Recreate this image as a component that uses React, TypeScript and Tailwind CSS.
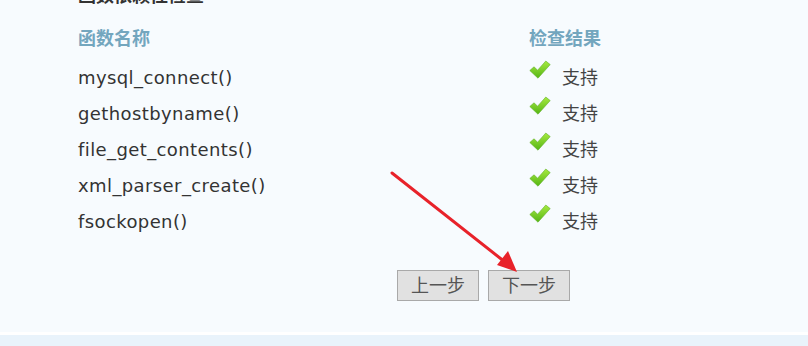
import React from "react";

const rows = [
  "mysql_connect()",
  "gethostbyname()",
  "file_get_contents()",
  "xml_parser_create()",
  "fsockopen()",
];

function Check() {
  return (
    <svg width="22" height="20" viewBox="0 0 22 20" className="shrink-0">
      <defs>
        <linearGradient id="cg" x1="0" y1="0" x2="0" y2="1">
          <stop offset="0" stopColor="#a6ea40" />
          <stop offset="1" stopColor="#55b514" />
        </linearGradient>
      </defs>
      <path
        d="M0.8 10.5 L5 6.8 L8.6 10.2 L16.8 1 L21.2 4.6 L9 18.2 Z"
        fill="url(#cg)"
        stroke="#62b02a"
        strokeWidth="0.6"
        strokeLinejoin="round"
      />
    </svg>
  );
}

export default function App() {
  const font = { fontFamily: '"DejaVu Sans", "Noto Sans CJK SC", sans-serif' };
  return (
    <div className="w-[808px] h-[346px] overflow-hidden bg-[#e9f3fb] relative" style={font}>
      <div className="h-[332px] bg-[#f7fbfe] overflow-hidden">
        <div className="pl-[78px] -mt-[14px] h-[20px] text-[18px] leading-[20px] font-bold text-[#333]">
          函数依赖性检查
        </div>
        <div className="grid grid-cols-[451px_1fr] pl-[78px] mt-[19px] h-[24px] items-center text-[18px] font-bold text-[#73a6be]">
          <div>函数名称</div>
          <div>检查结果</div>
        </div>
        <div className="mt-[16px] flex flex-col">
          {rows.map((r) => (
            <div key={r} className="grid grid-cols-[451px_1fr] pl-[78px] h-[36px] items-center text-[18px] tracking-[0.4px] text-[#333]">
              <div className="-mt-[12px]">{r}</div>
              <div className="flex items-start gap-[11px] -mt-[12px] tracking-normal">
                <div className="-mt-[4px]"><Check /></div>
                <span className="text-[18px] text-[#444]">支持</span>
              </div>
            </div>
          ))}
        </div>
        <div className="flex gap-[9px] mt-[25px] pl-[397px]">
          <button className="w-[82px] h-[31px] bg-[#e1e1e1] border border-[#a9a9a9] text-[18px] text-[#555]">上一步</button>
          <button className="w-[82px] h-[31px] bg-[#e1e1e1] border border-[#a9a9a9] text-[18px] text-[#555]">下一步</button>
        </div>
      </div>
      <div className="h-[3px] bg-white" />
      <svg className="absolute left-0 top-0 pointer-events-none" width="808" height="346">
        <line x1="392" y1="173" x2="505" y2="262" stroke="#e8222a" strokeWidth="3" strokeLinecap="round" />
        <polygon points="517,272 497,265 508,251" fill="#e8222a" />
      </svg>
    </div>
  );
}
